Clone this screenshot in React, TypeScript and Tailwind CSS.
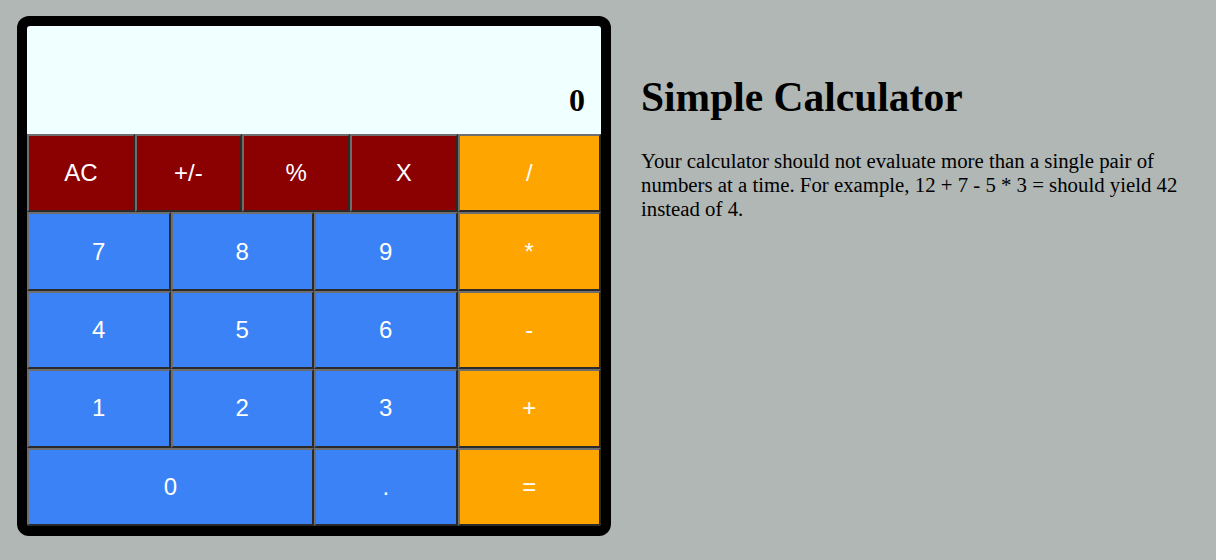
import React, { useState } from "react";

type Key = { label: string; kind: "fn" | "num" | "op"; span: string };

const keys: Key[] = [
  { label: "AC", kind: "fn", span: "col-span-3" },
  { label: "+/-", kind: "fn", span: "col-span-3" },
  { label: "%", kind: "fn", span: "col-span-3" },
  { label: "X", kind: "fn", span: "col-span-3" },
  { label: "/", kind: "op", span: "col-span-4" },
  { label: "7", kind: "num", span: "col-span-4" },
  { label: "8", kind: "num", span: "col-span-4" },
  { label: "9", kind: "num", span: "col-span-4" },
  { label: "*", kind: "op", span: "col-span-4" },
  { label: "4", kind: "num", span: "col-span-4" },
  { label: "5", kind: "num", span: "col-span-4" },
  { label: "6", kind: "num", span: "col-span-4" },
  { label: "-", kind: "op", span: "col-span-4" },
  { label: "1", kind: "num", span: "col-span-4" },
  { label: "2", kind: "num", span: "col-span-4" },
  { label: "3", kind: "num", span: "col-span-4" },
  { label: "+", kind: "op", span: "col-span-4" },
  { label: "0", kind: "num", span: "col-span-8" },
  { label: ".", kind: "num", span: "col-span-4" },
  { label: "=", kind: "op", span: "col-span-4" },
];

const colors = {
  fn: "bg-[#8b0000]",
  num: "bg-[#3b82f6]",
  op: "bg-[#ffa500]",
};

export default function App() {
  const [display, setDisplay] = useState("0");

  const press = (label: string) => {
    if (label === "AC") setDisplay("0");
  };

  return (
    <div className="min-h-[560px] bg-[#b1b7b4] pt-4 pl-[17px] pr-4 flex gap-[30px]">
      {/* calculator */}
      <div className="w-[594px] h-[520px] shrink-0 bg-black rounded-[12px] p-[10px] flex">
        <div className="flex flex-col w-full rounded-[3px] overflow-hidden">
          <div className="h-[108px] bg-[#f0ffff] flex items-end justify-end pr-4 pb-[10px]">
            <span className="text-[32px] font-bold font-['Liberation_Serif',serif] text-black">
              {display}
            </span>
          </div>
          <div className="flex-1 grid grid-cols-16 grid-rows-5">
            {keys.map((k) => (
              <button
                key={k.label}
                onClick={() => press(k.label)}
                className={`${k.span} ${colors[k.kind]} border-2 border-t-[#6e6e6e] border-l-[#6e6e6e] border-b-[#2a2a2a] border-r-[#2a2a2a] text-white text-[24px] font-['Liberation_Sans',Arial,sans-serif] flex items-center justify-center`}
              >
                {k.label}
              </button>
            ))}
          </div>
        </div>
      </div>

      {/* description */}
      <div className="flex-1 font-['Liberation_Serif',serif] text-black">
        <h1 className="mt-[50px] text-[41.5px] font-bold leading-normal">Simple Calculator</h1>
        <p className="mt-[21px] text-[20.8px] leading-[24px]">
          Your calculator should not evaluate more than a single pair of numbers at a time. For
          example, 12 + 7 - 5 * 3 = should yield 42 instead of 4.
        </p>
      </div>
    </div>
  );
}
